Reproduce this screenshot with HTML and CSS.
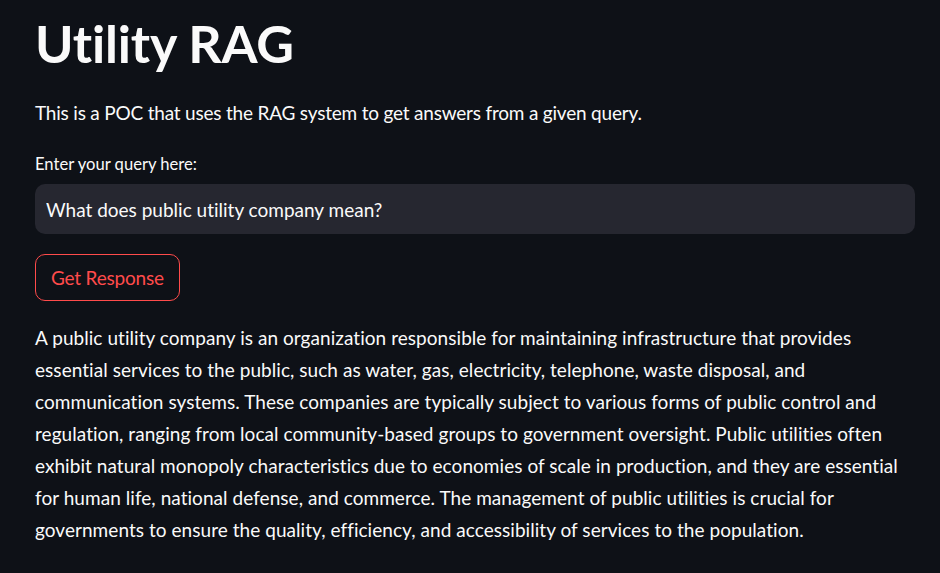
FILE: index.html
```html
<!DOCTYPE html>
<html lang="en">
<head>
<meta charset="utf-8">
<title>Utility RAG</title>
<link rel="stylesheet" href="styles.css">
</head>
<body>
<main class="page">
  <h1 class="title">Utility RAG</h1>
  <p class="intro">This is a POC that uses the RAG system to get answers from a given query.</p>
  <div class="field">
    <label class="label" for="q">Enter your query here:</label>
    <input class="input" id="q" type="text" value="What does public utility company mean?">
  </div>
  <button class="btn" type="button">Get Response</button>
  <p class="answer">A public utility company is an organization responsible for maintaining infrastructure that provides essential services to the public, such as water, gas, electricity, telephone, waste disposal, and communication systems. These companies are typically subject to various forms of public control and regulation, ranging from local community-based groups to government oversight. Public utilities often exhibit natural monopoly characteristics due to economies of scale in production, and they are essential for human life, national defense, and commerce. The management of public utilities is crucial for governments to ensure the quality, efficiency, and accessibility of services to the population.</p>
</main>
</body>
</html>
```
FILE: styles.css
```css
html, body {
  margin: 0;
  background: #0e1117;
  color: #fafafa;
  font-family: Lato, "Open Sans", sans-serif;
  font-variant-ligatures: none;
}
.page {
  padding: 11px 25px 0 35px;
  display: flex;
  flex-direction: column;
  align-items: flex-start;
}
.title {
  margin: 0;
  font-size: 52px;
  font-weight: 700;
  line-height: 64px;
  letter-spacing: -0.2px;
}
.intro {
  margin: 22px 0 0;
  font-size: 19px;
  line-height: 32px;
  letter-spacing: -0.2px;
}
.field {
  margin-top: 24px;
  display: flex;
  flex-direction: column;
  align-self: stretch;
  gap: 9px;
}
.label {
  font-size: 16.6px;
  line-height: 22px;
}
.input {
  box-sizing: border-box;
  height: 50px;
  border: 0;
  border-radius: 10px;
  background: #262730;
  color: #fafafa;
  font-family: inherit;
  font-variant-ligatures: none;
  font-size: 19px;
  letter-spacing: 0;
  padding: 0 11px;
  outline: none;
}
.btn {
  margin-top: 20px;
  box-sizing: border-box;
  height: 47px;
  padding: 0 15px;
  border: 1px solid #ff4b4b;
  border-radius: 10px;
  background: #0e1117;
  color: #ff4b4b;
  font-family: inherit;
  font-variant-ligatures: none;
  font-size: 19px;
  letter-spacing: -0.2px;
}
.answer {
  margin: 21px 0 0;
  font-size: 19px;
  line-height: 32px;
  letter-spacing: 0.05px;
  max-width: 880px;
}
```
